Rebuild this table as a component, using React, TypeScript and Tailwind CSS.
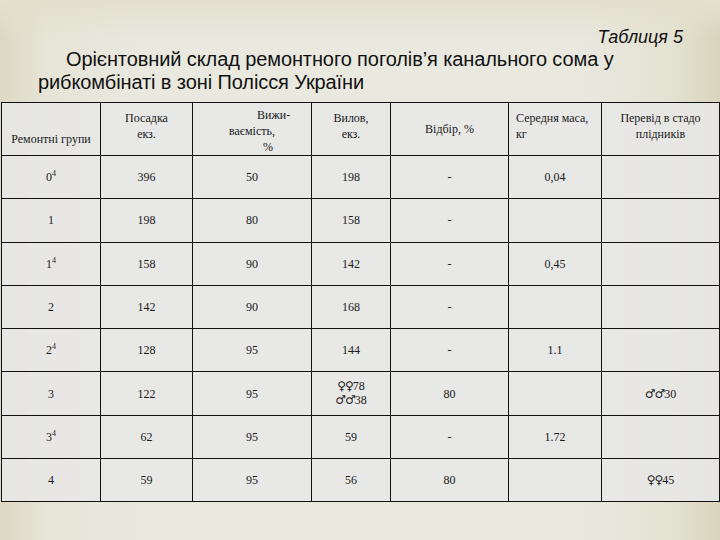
import type { ReactNode } from "react";

type Row = {
  group: ReactNode;
  stock: string;
  survival: string;
  catch: ReactNode;
  cull: string;
  mass: string;
  transfer: ReactNode;
};

const Sup = ({ n }: { n: string }) => (
  <>
    {n}
    <sup className="text-[8px] -top-[5px]">4</sup>
  </>
);

// gender glyphs come from DejaVu, which has them
const Sym = ({ s }: { s: string }) => (
  <span className="font-['DejaVu_Serif','DejaVu_Sans',serif] text-[12px] tracking-[-1px]">{s}</span>
);

const rows: Row[] = [
  { group: <Sup n="0" />, stock: "396", survival: "50", catch: "198", cull: "-", mass: "0,04", transfer: "" },
  { group: "1", stock: "198", survival: "80", catch: "158", cull: "-", mass: "", transfer: "" },
  { group: <Sup n="1" />, stock: "158", survival: "90", catch: "142", cull: "-", mass: "0,45", transfer: "" },
  { group: "2", stock: "142", survival: "90", catch: "168", cull: "-", mass: "", transfer: "" },
  { group: <Sup n="2" />, stock: "128", survival: "95", catch: "144", cull: "-", mass: "1.1", transfer: "" },
  {
    group: "3",
    stock: "122",
    survival: "95",
    catch: (
      <span className="inline-block leading-[14px]">
        <Sym s="♀♀" />
        78
        <br />
        <Sym s="♂♂" />
        38
      </span>
    ),
    cull: "80",
    mass: "",
    transfer: (
      <>
        <Sym s="♂♂" />
        30
      </>
    ),
  },
  { group: <Sup n="3" />, stock: "62", survival: "95", catch: "59", cull: "-", mass: "1.72", transfer: "" },
  {
    group: "4",
    stock: "59",
    survival: "95",
    catch: "56",
    cull: "80",
    mass: "",
    transfer: (
      <>
        <Sym s="♀♀" />
        45
      </>
    ),
  },
];

const cell = "border border-[#111] text-center align-middle p-0";

export default function App() {
  return (
    <div className="w-[720px] h-[540px] overflow-hidden bg-[linear-gradient(to_right,#dcd8c2,#e6e4d6_6%,#eae9e0_20%,#eae9e0_80%,#e4e2d2_93%,#d8d4bc)]">
      <div className="h-full bg-[linear-gradient(to_bottom,#e3e0ce,rgba(234,233,224,0)_40px)] pt-[26px]">
        {/* title */}
        <div className="font-['Liberation_Sans',Arial,sans-serif] text-[#111]">
          <p className="text-right pr-[37px] italic text-[18px] leading-[22px]">Таблиця 5</p>
          <p className="pl-[66px] text-[20px] leading-[23px] tracking-[-0.1px]">
            Орієнтовний склад ремонтного поголів’я канального сома у
          </p>
          <p className="pl-[38px] text-[20px] leading-[23px] tracking-[-0.1px]">рибкомбінаті в зоні Полісся України</p>
        </div>

        {/* table */}
        <table className="mt-[8px] ml-[1px] w-[718px] table-fixed border-collapse bg-[rgba(232,232,232,0.85)] font-['Liberation_Serif','Times_New_Roman',serif] text-[12px] text-[#1a1a1a]">
          <colgroup>
            <col className="w-[99px]" />
            <col className="w-[92px]" />
            <col className="w-[119px]" />
            <col className="w-[79px]" />
            <col className="w-[118px]" />
            <col className="w-[93px]" />
            <col className="w-[118px]" />
          </colgroup>
          <thead>
            <tr className="h-[53px] leading-[16px]">
              <th className="border border-[#111] font-normal align-bottom pb-[8px] text-center">Ремонтні групи</th>
              <th className={`${cell} font-normal`}>
                <div className="-mt-[6px]">
                  Посадка
                  <br />
                  екз.
                </div>
              </th>
              <th className={`${cell} font-normal`}>
                <div className="text-left pl-[36px] pt-[4px]">
                  <div className="pl-[28px]">Вижи-</div>
                  <div>ваємість,</div>
                  <div className="pl-[34px]">%</div>
                </div>
              </th>
              <th className={`${cell} font-normal`}>
                <div className="-mt-[6px]">
                  Вилов,
                  <br />
                  екз.
                </div>
              </th>
              <th className={`${cell} font-normal`}>Відбір, %</th>
              <th className={`${cell} font-normal text-left`}>
                <div className="pl-[7px] -mt-[6px]">
                  Середня маса,
                  <br />
                  кг
                </div>
              </th>
              <th className={`${cell} font-normal`}>
                <div className="-mt-[6px]">
                  Перевід в стадо
                  <br />
                  плідників
                </div>
              </th>
            </tr>
          </thead>
          <tbody>
            {rows.map((r, i) => (
              <tr key={i} className="h-[43.3px]">
                <td className={cell}>{r.group}</td>
                <td className={cell}>{r.stock}</td>
                <td className={cell}>{r.survival}</td>
                <td className={cell}>{r.catch}</td>
                <td className={cell}>{r.cull}</td>
                <td className={cell}>{r.mass}</td>
                <td className={cell}>{r.transfer}</td>
              </tr>
            ))}
          </tbody>
        </table>
      </div>
    </div>
  );
}
